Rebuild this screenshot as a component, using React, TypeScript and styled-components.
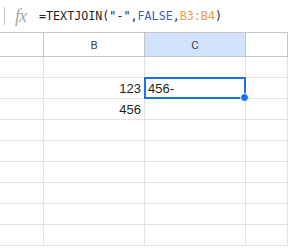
import styled, { createGlobalStyle } from "styled-components";

const GlobalStyle = createGlobalStyle`
  html, body {
    margin: 0;
    padding: 0;
    background: #ffffff;
  }
`;

const Page = styled.div`
  width: 288px;
  height: 252px;
  overflow: hidden;
  background: #ffffff;
  font-family: "Liberation Sans", Arial, sans-serif;
`;

const FormulaBar = styled.div`
  height: 33px;
  box-sizing: border-box;
  border-bottom: 1px solid #c4c7c5;
  display: flex;
  align-items: center;
  padding-left: 4px;
`;

const Divider = styled.div`
  width: 1px;
  height: 18px;
  background: #c4c7c5;
  margin-right: 10px;
`;

const Fx = styled.span`
  font-family: "Liberation Serif", "DejaVu Serif", serif;
  font-style: italic;
  font-size: 18px;
  color: #a8a8a8;
  width: 24px;
  letter-spacing: -1px;
`;

const Formula = styled.div`
  font-family: "DejaVu Sans Mono", "Liberation Mono", monospace;
  font-size: 11.7px;
  color: #1f1f1f;
  white-space: pre;
`;

const Token = styled.span<{ $kind: "bool" | "ref" }>`
  color: ${(p) => (p.$kind === "bool" ? "#3d5fc2" : "#ee9a55")};
`;

const Grid = styled.div`
  display: grid;
  grid-template-columns: 44px 101px 101px 1fr;
  grid-auto-rows: 21px;
  grid-template-rows: 24px;
`;

const Header = styled.div<{ $active?: boolean }>`
  box-sizing: border-box;
  border-right: 1px solid #c4c7c5;
  border-bottom: 1px solid #c4c7c5;
  background: ${(p) => (p.$active ? "#d3e3fd" : "#ffffff")};
  color: #444746;
  font-family: "Roboto", "Liberation Sans", sans-serif;
  font-size: 11.5px;
  display: flex;
  align-items: center;
  justify-content: center;
`;

const Cell = styled.div<{ $align?: "left" | "right" }>`
  position: relative;
  box-sizing: border-box;
  border-right: 1px solid #e1e1e1;
  border-bottom: 1px solid #e1e1e1;
  font-size: 13px;
  color: #1f1f1f;
  display: flex;
  align-items: center;
  justify-content: ${(p) => (p.$align === "right" ? "flex-end" : "flex-start")};
  padding: 1px 3px 0 3px;
`;

const Selection = styled.div`
  position: absolute;
  z-index: 2;
  left: -1px;
  top: -1px;
  right: -1px;
  bottom: -1px;
  border: 2px solid #1a73e8;
  pointer-events: none;
`;

const Handle = styled.div`
  position: absolute;
  right: -5px;
  bottom: -5px;
  width: 7px;
  height: 7px;
  border-radius: 50%;
  background: #1a73e8;
  border: 1px solid #ffffff;
`;

const rows: [string, string][] = [
  ["", ""],
  ["123", "456-"],
  ["456", ""],
  ["", ""],
  ["", ""],
  ["", ""],
  ["", ""],
  ["", ""],
  ["", ""],
];

const Row = ({ b, c, selected }: { b: string; c: string; selected: boolean }) => (
  <>
    <Cell />
    <Cell $align="right">{b}</Cell>
    <Cell>
      {c}
      {selected && (
        <Selection>
          <Handle />
        </Selection>
      )}
    </Cell>
    <Cell />
  </>
);

const App = () => {
  return (
    <Page>
      <GlobalStyle />
      <FormulaBar>
        <Divider />
        <Fx>fx</Fx>
        <Formula>
          =TEXTJOIN("-",<Token $kind="bool">FALSE</Token>,
          <Token $kind="ref">B3:B4</Token>)
        </Formula>
      </FormulaBar>
      <Grid>
        <Header />
        <Header>B</Header>
        <Header $active>C</Header>
        <Header />
        {rows.map(([b, c], i) => (
          <Row key={i} b={b} c={c} selected={i === 1} />
        ))}
      </Grid>
    </Page>
  );
};

export default App;
